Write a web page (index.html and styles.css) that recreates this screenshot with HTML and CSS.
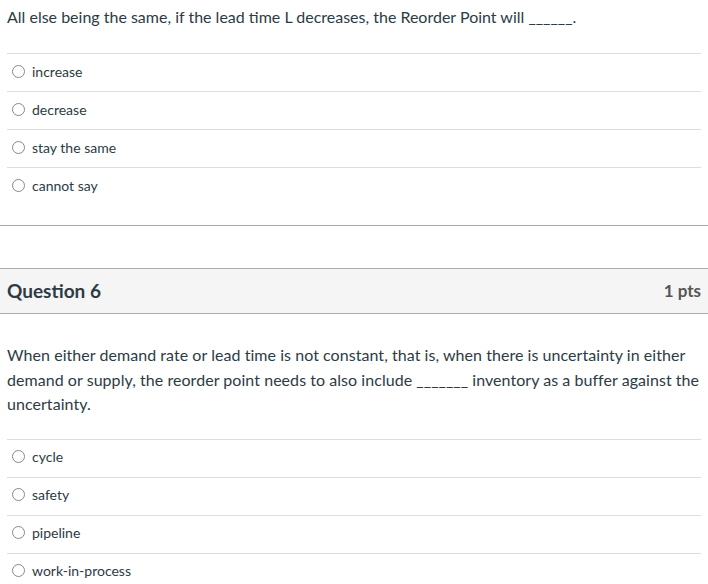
FILE: index.html
```html
<!DOCTYPE html>
<html>
<head>
<meta charset="utf-8">
<link rel="stylesheet" href="styles.css">
</head>
<body>
<div class="question">
  <div class="text top-text">All else being the same, if the lead time L decreases, the Reorder Point will ______.</div>
  <div class="answers">
    <div class="answer"><span class="radio"></span><span>increase</span></div>
    <div class="answer"><span class="radio"></span><span>decrease</span></div>
    <div class="answer"><span class="radio"></span><span>stay the same</span></div>
    <div class="answer"><span class="radio"></span><span>cannot say</span></div>
  </div>
</div>
<div class="divider"></div>
<div class="header">
  <div class="title">Question 6</div>
  <div class="pts">1 pts</div>
</div>
<div class="question">
  <div class="text body-text">When either demand rate or lead time is not constant, that is, when there is uncertainty in either demand or supply, the reorder point needs to also include _______ inventory as a buffer against the uncertainty.</div>
  <div class="answers">
    <div class="answer"><span class="radio"></span><span>cycle</span></div>
    <div class="answer"><span class="radio"></span><span>safety</span></div>
    <div class="answer"><span class="radio"></span><span>pipeline</span></div>
    <div class="answer"><span class="radio"></span><span>work-in-process</span></div>
  </div>
</div>
</body>
</html>
```
FILE: styles.css
```css
html, body {
  margin: 0;
  padding: 0;
  background: #fff;
}
body {
  font-family: Lato, "Liberation Sans", sans-serif;
  color: #2d3b45;
  width: 708px;
  overflow: hidden;
}
.question {
  padding: 0 7px;
}
.text {
  font-size: 16px;
  line-height: 24.5px;
}
.top-text {
  padding-top: 5px;
  height: 48px;
}
.body-text {
  padding-top: 29px;
  padding-bottom: 22px;
  letter-spacing: 0.05px;
}
.answers {
  display: flex;
  flex-direction: column;
}
.answer {
  height: 38px;
  border-top: 1px solid #dddddd;
  box-sizing: border-box;
  display: flex;
  align-items: center;
  gap: 7px;
  padding-left: 5px;
  padding-bottom: 3px;
  font-size: 14px;
}
.radio {
  width: 13px;
  height: 13px;
  border: 1px solid #888;
  border-radius: 50%;
  box-sizing: border-box;
  flex: none;
}
.divider {
  margin-top: 20px;
  height: 0;
  border-top: 1px solid #aaaaaa;
  margin-bottom: 42px;
}
.header {
  height: 46px;
  box-sizing: border-box;
  background: #f5f5f5;
  border-top: 1px solid #aaaaaa;
  border-bottom: 1px solid #aaaaaa;
  display: flex;
  justify-content: space-between;
  align-items: center;
  padding: 0 7px 1px;
}
.title {
  font-size: 19px;
  font-weight: bold;
  color: #2d3b45;
}
.pts {
  font-size: 17px;
  font-weight: bold;
  color: #555;
}
```
